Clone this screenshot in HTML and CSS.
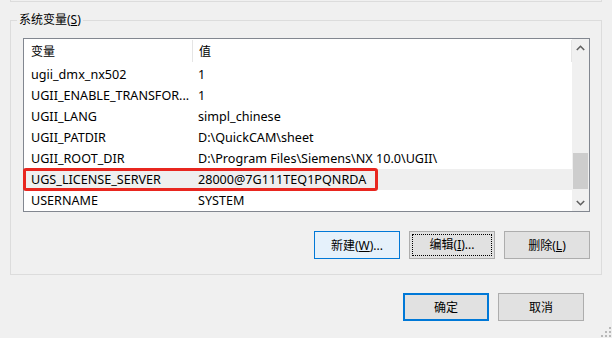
FILE: index.html
```html
<!DOCTYPE html>
<html lang="zh-CN">
<head>
    <meta charset="UTF-8">
    <meta name="viewport" content="width=device-width, initial-scale=1.0">
    <title>环境变量</title>
    <link rel="stylesheet" href="styles.css">
</head>
<body>

    <!-- 上方用户变量分组（只露出底边） -->
    <div class="top-group"></div>

    <!-- 系统变量 -->
    <fieldset class="group">
        <legend>系统变量(<u>S</u>)</legend>

        <div class="listview">
            <div class="lv-body">
                <div class="lv-header">
                    <span class="col-name">变量</span>
                    <span class="col-value">值</span>
                </div>
                <div class="lv-row">
                    <span class="col-name">ugii_dmx_nx502</span>
                    <span class="col-value">1</span>
                </div>
                <div class="lv-row">
                    <span class="col-name">UGII_ENABLE_TRANSFOR...</span>
                    <span class="col-value">1</span>
                </div>
                <div class="lv-row">
                    <span class="col-name">UGII_LANG</span>
                    <span class="col-value">simpl_chinese</span>
                </div>
                <div class="lv-row">
                    <span class="col-name">UGII_PATDIR</span>
                    <span class="col-value">D:\QuickCAM\sheet</span>
                </div>
                <div class="lv-row">
                    <span class="col-name">UGII_ROOT_DIR</span>
                    <span class="col-value">D:\Program Files\Siemens\NX 10.0\UGII\</span>
                </div>
                <div class="lv-row selected">
                    <span class="col-name">UGS_LICENSE_SERVER</span>
                    <span class="col-value">28000@7G111TEQ1PQNRDA</span>
                    <span class="mark"></span>
                </div>
                <div class="lv-row">
                    <span class="col-name">USERNAME</span>
                    <span class="col-value">SYSTEM</span>
                </div>
            </div>

            <div class="scrollbar">
                <div class="sb-btn">
                    <svg width="9" height="6" viewBox="0 0 9 6"><polyline points="0.8,5 4.5,1.3 8.2,5" fill="none" stroke="#606060" stroke-width="1.6"/></svg>
                </div>
                <div class="sb-track">
                    <div class="sb-thumb"></div>
                </div>
                <div class="sb-btn">
                    <svg width="9" height="6" viewBox="0 0 9 6"><polyline points="0.8,1 4.5,4.7 8.2,1" fill="none" stroke="#606060" stroke-width="1.6"/></svg>
                </div>
            </div>
        </div>

        <div class="group-buttons">
            <button class="btn hover">新建(<u>W</u>)...</button>
            <button class="btn focus"><span>编辑(<u>I</u>)...</span></button>
            <button class="btn">删除(<u>L</u>)</button>
        </div>
    </fieldset>

    <!-- 确定 / 取消 -->
    <div class="dialog-buttons">
        <button class="btn default">确定</button>
        <button class="btn">取消</button>
    </div>

    <svg class="grip" width="11" height="11" viewBox="0 0 11 11">
        <rect x="8" y="0" width="2" height="2" fill="#b8b8b8"/>
        <rect x="4" y="4" width="2" height="2" fill="#b8b8b8"/>
        <rect x="8" y="4" width="2" height="2" fill="#b8b8b8"/>
        <rect x="0" y="8" width="2" height="2" fill="#b8b8b8"/>
        <rect x="4" y="8" width="2" height="2" fill="#b8b8b8"/>
        <rect x="8" y="8" width="2" height="2" fill="#b8b8b8"/>
    </svg>

</body>
</html>
```

FILE: styles.css
```css
body {
    margin: 0;
    width: 612px;
    height: 338px;
    overflow: hidden;
    position: relative;
    background-color: #f0f0f0;
    font-family: "Noto Sans", "Noto Sans CJK SC", sans-serif;
    font-size: 12px;
    color: #000;
}

.top-group {
    height: 1px;
    margin: 0 10px 0 10px;
    border: 1px solid #dcdcdc;
    border-top: none;
}

.group {
    margin: 10px 10px 0 10px;
    padding: 10px 11px 15px 12px;
    border: 1px solid #dcdcdc;
}

.group legend {
    margin-left: -6px;
    padding: 0 2px;
    line-height: 16px;
}

/* 列表 */
.listview {
    display: flex;
    height: 172px;
    border: 1px solid #828790;
    background-color: #fff;
}

.lv-body {
    flex: 1;
}

.lv-header,
.lv-row {
    display: flex;
    height: 21px;
    line-height: 21px;
    white-space: nowrap;
}

.lv-row {
    font-size: 12.6px;
}

.lv-header {
    height: 25px;
    line-height: 25px;
}

.col-name {
    width: 161px;
    padding-left: 7px;
    overflow: hidden;
}

.col-value {
    flex: 1;
    padding-left: 6px;
}

.lv-header .col-name {
    border-right: 1px solid #e5e5e5;
    margin: 1px 0 2px;
    line-height: 23px;
}

.lv-header .col-value {
    border-right: 1px solid #e5e5e5;
    margin: 1px 0 2px;
    padding-left: 6px;
    line-height: 23px;
}

.lv-row.selected {
    position: relative;
    background-color: #efefef;
}

.mark {
    position: absolute;
    left: -1px;
    top: -1px;
    width: 355px;
    height: 23px;
    box-sizing: border-box;
    border: 3px solid #e8261f;
    border-radius: 3px;
}

/* 滚动条 */
.scrollbar {
    width: 17px;
    display: flex;
    flex-direction: column;
    background-color: #f0f0f0;
}

.sb-btn {
    height: 17px;
    display: flex;
    align-items: center;
    justify-content: center;
}

.sb-track {
    flex: 1;
}

.sb-thumb {
    margin: 97px 1px 0;
    height: 36px;
    background-color: #cdcdcd;
}

/* 按钮 */
.btn {
    width: 86px;
    height: 28px;
    padding: 0;
    font-family: inherit;
    font-size: 12px;
    color: #000;
    background-color: #e1e1e1;
    border: 1px solid #adadad;
    border-radius: 0;
}

.btn.hover {
    background-color: #e5f1fb;
    border-color: #0078d7;
}

.btn.focus {
    padding: 2px;
}

.btn.focus span {
    display: block;
    height: 100%;
    box-sizing: border-box;
    border: 1px dotted #000;
    line-height: 20px;
}

.btn.default {
    border: 2px solid #0078d7;
}

.group-buttons {
    display: flex;
    justify-content: flex-end;
    gap: 9px;
    margin-top: 19px;
}

.dialog-buttons {
    display: flex;
    justify-content: flex-end;
    gap: 9px;
    margin: 18px 28px 0 0;
}

.grip {
    position: absolute;
    right: 0;
    bottom: 0;
}
```
